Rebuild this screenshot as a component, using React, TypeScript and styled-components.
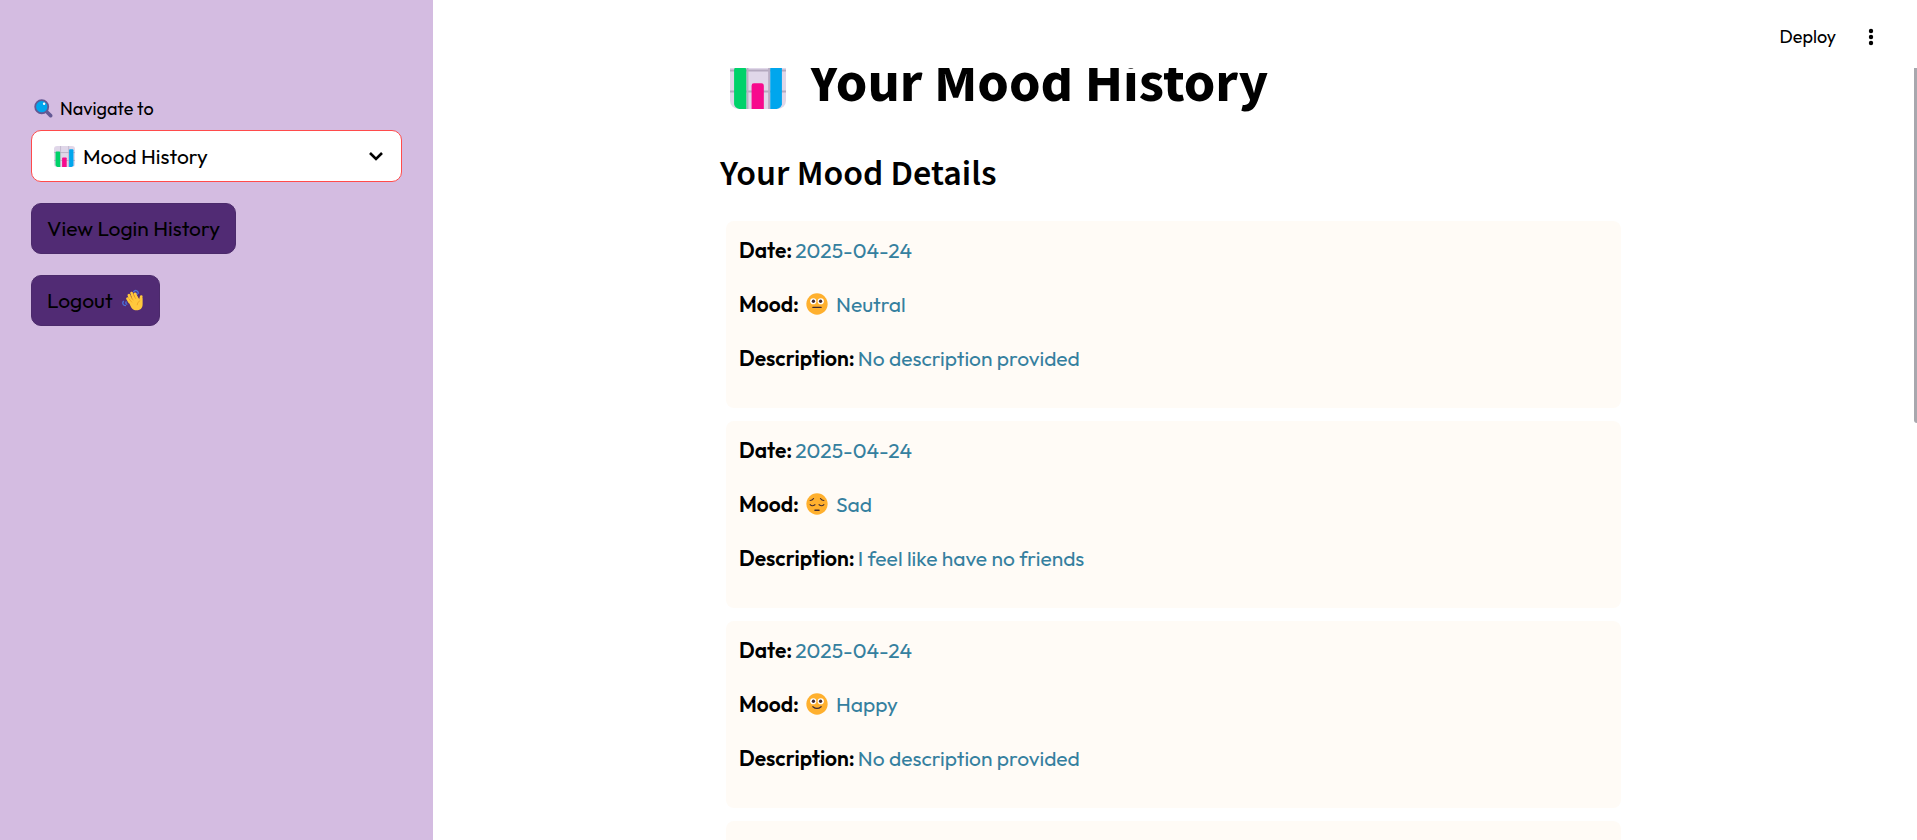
import React from "react";
import styled, { createGlobalStyle } from "styled-components";

const GlobalStyle = createGlobalStyle`
  *, *::before, *::after { box-sizing: border-box; }
  body {
    margin: 0;
    background: #ffffff;
    color: #000000;
    font-family: Outfit, Lato, sans-serif;
    font-size: 21px;
  }
  button, select { font: inherit; color: inherit; }
`;

const Page = styled.div`
  display: flex;
  height: 100vh;
  overflow: hidden;
`;

const Sidebar = styled.aside`
  flex: none;
  width: 433px;
  padding: 94px 31px 31px;
  background: #d4bce1;
`;

const NavForm = styled.form`
  display: flex;
  flex-direction: column;
  align-items: flex-start;
  gap: 21px;
`;

const Field = styled.div`
  width: 100%;
`;

const FieldLabel = styled.label`
  display: flex;
  align-items: center;
  gap: 7px;
  height: 28px;
  margin-bottom: 8px;
  padding-left: 3px;
  font-size: 18px;
`;

const SelectBox = styled.div`
  position: relative;
`;

const Select = styled.select`
  display: block;
  width: 100%;
  height: 52px;
  padding: 0 51px;
  border: 1px solid #ff4b4b;
  border-radius: 10px;
  outline: none;
  background: #ffffff;
  appearance: none;
`;

const SelectIcon = styled.span<{ $side: "left" | "right" }>`
  position: absolute;
  top: 0;
  bottom: 0;
  ${(p) => p.$side}: ${(p) => (p.$side === "left" ? 23 : 18)}px;
  display: flex;
  align-items: center;
  pointer-events: none;
`;

const NavButton = styled.button`
  display: flex;
  align-items: center;
  gap: 9px;
  height: 51px;
  padding: 0 15px 2px;
  border: 1px solid #4b2a6b;
  border-radius: 10px;
  background: #512b74;
`;

const Main = styled.main`
  position: relative;
  flex: 1;
  min-width: 0;
  display: flex;
  flex-direction: column;
`;

const Header = styled.header`
  flex: none;
  display: flex;
  align-items: center;
  justify-content: flex-end;
  gap: 24px;
  height: 68px;
  padding: 5px 35px 0 0;
`;

const HeaderButton = styled.button`
  display: flex;
  align-items: center;
  padding: 0;
  border: 0;
  background: none;
  font-size: 18px;
`;

const ScrollArea = styled.div`
  flex: 1;
  min-height: 0;
  margin-right: 3px;
  overflow-y: auto;
  scrollbar-width: none;
`;

const ScrollThumb = styled.div`
  position: absolute;
  top: 68px;
  right: 0;
  width: 3px;
  height: 355px;
  border-radius: 0 0 0 3px;
  background: #a8a8ae;
`;

const Content = styled.div`
  max-width: 915px;
  margin: 0 auto;
`;

const Title = styled.h1`
  display: flex;
  align-items: flex-start;
  gap: 23px;
  height: 62px;
  margin: -15px 0 0;
  padding-left: 14px;
  font-family: "Source Sans Pro", "Source Sans 3", "Noto Sans CJK SC", sans-serif;
  font-size: 57px;
  font-weight: 700;
  line-height: 62px;
`;

const Subtitle = styled.h2`
  margin: 35px 0 24px;
  padding-left: 4px;
  font-family: "Source Sans Pro", "Source Sans 3", "Noto Sans CJK SC", sans-serif;
  font-size: 36px;
  font-weight: 600;
  line-height: 47px;
`;

const CardList = styled.div`
  display: flex;
  flex-direction: column;
  gap: 13px;
  padding: 0 10px 21px;
`;

const Card = styled.article`
  display: flex;
  flex-direction: column;
  gap: 20px;
  padding: 12px 13px 33px;
  border-radius: 8px;
  background: #fffbf6;
`;

const Row = styled.p`
  display: flex;
  align-items: center;
  gap: 3px;
  margin: 0;
  line-height: 34px;
`;

const Term = styled.strong`
  font-weight: 600;
`;

const Value = styled.span`
  display: flex;
  align-items: center;
  gap: 8px;
  color: #35809f;
`;

const MoodIcon = styled.span`
  display: flex;
  padding-left: 4px;
`;

type Mood = "Neutral" | "Sad" | "Happy";

function ChartIcon({ size }: { size: number }) {
  return (
    <svg width={size} height={size} viewBox="0 0 48 48" aria-hidden="true">
      <rect width="48" height="48" rx="7" fill="#e0d7e9" />
      <path d="M0 15H48M0 33H48" stroke="#b4a9bf" strokeWidth="1.8" />
      <path d="M15 0V48M33.500 0V48" stroke="#b9aec4" strokeWidth="1.6" />
      <path d="M3.5 14.500a2 2 0 0 1 2-2h6.500a2 2 0 0 1 2 2V48H8Q4 47 3.500 44Z" fill="#00d26a" />
      <path d="M18.500 28a2 2 0 0 1 2-2h6.500a2 2 0 0 1 2 2V48H18.500Z" fill="#f70a8d" />
      <path d="M34.500 9.500a2 2 0 0 1 2-2h6a2 2 0 0 1 2 2V44Q44 47 40 48H34.500Z" fill="#00a6ed" />
    </svg>
  );
}

function SearchIcon() {
  return (
    <svg width="19" height="19" viewBox="0 0 32 32" aria-hidden="true">
      <path d="M21 21 28 28" stroke="#635994" strokeWidth="6" strokeLinecap="round" />
      <circle cx="13" cy="13" r="11" fill="#00a6ed" stroke="#635994" strokeWidth="3" />
      <circle cx="17" cy="8" r="2" fill="#ffffff" />
    </svg>
  );
}

function WaveIcon() {
  return (
    <svg width="22" height="22" viewBox="0 0 32 32" aria-hidden="true">
      <path
        d="M17 4c2-3 6-2 7 2M19 7c1-1 3-1 3 1M2 18c-2 3 0 6 3 6M6 19c-1 1 0 3 1 3"
        fill="none"
        stroke="#4a6fd8"
        strokeWidth="2"
        strokeLinecap="round"
      />
      <path
        d="M11 19 8 14M13 16 10 9M17 14 14 6M21 13 19 7M26 19 28 11"
        stroke="#ffc83d"
        strokeWidth="4"
        strokeLinecap="round"
      />
      <path d="M9 16 22 10 26 16 30 13V22C30 28 26 31 21 31S14 28 12 24Z" fill="#ffc83d" />
      <path
        d="M12 9 16 16M16 7 20 14M10 14 14 19M26 17Q22 19 22 23"
        fill="none"
        stroke="#e99a20"
        strokeWidth="1"
        strokeLinecap="round"
      />
    </svg>
  );
}

function FaceIcon({ mood }: { mood: Mood }) {
  return (
    <svg width="22" height="22" viewBox="0 0 32 32" role="img" aria-label={`${mood} face`}>
      <circle cx="16" cy="16" r="15.5" fill="#ffb02e" />
      {mood === "Sad" ? (
        <g fill="none" stroke="#402a32" strokeWidth="1.6" strokeLinecap="round">
          <path d="M6 11Q9 11 11 8M21 8Q23 11 26 11" />
          <path d="M6 17Q9 20 13 17M19 17Q23 20 26 17" />
          <path d="M13 25H19" strokeWidth="2" />
        </g>
      ) : (
        <>
          <circle cx="10.5" cy="12" r="4.5" fill="#ffffff" />
          <circle cx="21.5" cy="12" r="4.5" fill="#ffffff" />
          <circle cx="10.8" cy="12" r="2.4" fill="#402a32" />
          <circle cx="21.2" cy="12" r="2.4" fill="#402a32" />
          <path
            d={mood === "Happy" ? "M10 20Q16 25 22 20" : "M10 21H22"}
            fill="none"
            stroke="#402a32"
            strokeWidth="1.8"
            strokeLinecap="round"
          />
        </>
      )}
    </svg>
  );
}

const entries: { date: string; mood: Mood; description: string }[] = [
  { date: "2025-04-24", mood: "Neutral", description: "No description provided" },
  { date: "2025-04-24", mood: "Sad", description: "I feel like have no friends" },
  { date: "2025-04-24", mood: "Happy", description: "No description provided" },
  { date: "2025-04-24", mood: "Happy", description: "No description provided" },
];

export default function App() {
  return (
    <Page>
      <GlobalStyle />
      <Sidebar>
        <NavForm onSubmit={(e) => e.preventDefault()}>
          <Field>
            <FieldLabel htmlFor="navigate">
              <SearchIcon />
              Navigate to
            </FieldLabel>
            <SelectBox>
              <Select id="navigate" defaultValue="history">
                <option value="history">Mood History</option>
              </Select>
              <SelectIcon $side="left">
                <ChartIcon size={21} />
              </SelectIcon>
              <SelectIcon $side="right">
                <svg width="16" height="10" viewBox="0 0 16 10" aria-hidden="true">
                  <path d="M2 2 8 8 14 2" fill="none" stroke="#000000" strokeWidth="2.6" />
                </svg>
              </SelectIcon>
            </SelectBox>
          </Field>
          <NavButton type="button">View Login History</NavButton>
          <NavButton type="button">
            Logout
            <WaveIcon />
          </NavButton>
        </NavForm>
      </Sidebar>
      <Main>
        <Header>
          <HeaderButton type="button">Deploy</HeaderButton>
          <HeaderButton type="button" aria-label="Main menu">
            <svg width="22" height="22" viewBox="0 0 22 22" aria-hidden="true">
              <circle cx="11" cy="5" r="2.2" />
              <circle cx="11" cy="11" r="2.2" />
              <circle cx="11" cy="17" r="2.2" />
            </svg>
          </HeaderButton>
        </Header>
        <ScrollArea>
          <Content>
            <Title>
              <ChartIcon size={56} />
              Your Mood History
            </Title>
            <Subtitle>Your Mood Details</Subtitle>
            <CardList>
              {entries.map((entry, i) => (
                <Card key={i}>
                  <Row>
                    <Term>Date:</Term>
                    <Value>{entry.date}</Value>
                  </Row>
                  <Row>
                    <Term>Mood:</Term>
                    <Value>
                      <MoodIcon>
                        <FaceIcon mood={entry.mood} />
                      </MoodIcon>
                      {entry.mood}
                    </Value>
                  </Row>
                  <Row>
                    <Term>Description:</Term>
                    <Value>{entry.description}</Value>
                  </Row>
                </Card>
              ))}
            </CardList>
          </Content>
        </ScrollArea>
        <ScrollThumb />
      </Main>
    </Page>
  );
}
